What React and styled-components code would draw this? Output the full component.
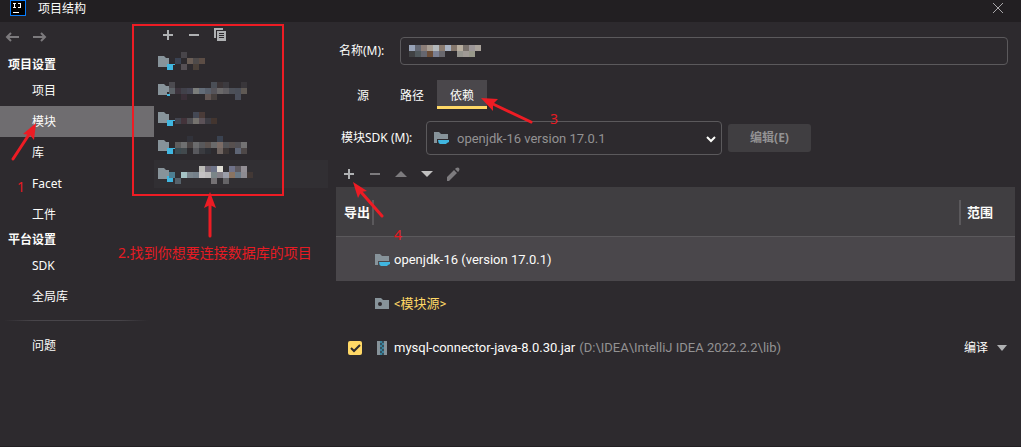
import React from 'react';
import styled, { createGlobalStyle, css } from 'styled-components';

const GlobalStyle = createGlobalStyle`
  * { box-sizing: border-box; }
  body {
    margin: 0;
    background: #2d2a2e;
    color: #fcfcfa;
    font: 12px/16px "Noto Sans", "Noto Sans CJK SC", sans-serif;
  }
  button, input, select { font: inherit; color: inherit; }
  svg { display: block; flex: none; }
`;

const bare = css`
  margin: 0;
  padding: 0;
  border: 0;
  background: none;
`;

const Window = styled.div`
  position: relative;
  display: flex;
  flex-direction: column;
  min-height: 100vh;
  border-bottom: 1px solid #221f22;
`;

const TitleBar = styled.header`
  display: flex;
  align-items: flex-start;
  gap: 12px;
  height: 22px;
  padding: 0 15px 0 10px;
  background: #221f22;
`;

const Title = styled.h1`
  flex: 1;
  margin: 0;
  font-size: 12px;
  line-height: 18px;
  font-weight: 400;
`;

const IconButton = styled.button`
  ${bare}
  display: grid;
  place-items: center;
  width: 16px;
  height: 16px;
`;

const Body = styled.div`
  flex: 1;
  display: grid;
  grid-template-columns: 154px 182px minmax(0, 1fr);
`;

const Sidebar = styled.nav`
  display: flex;
  flex-direction: column;
`;

const History = styled.div`
  display: flex;
  gap: 10px;
  height: 33px;
  padding: 7px 5px;
`;

const GroupTitle = styled.h2`
  margin: 0;
  padding-left: 8px;
  font-size: 12px;
  line-height: 20px;
  font-weight: 700;
`;

const NavItem = styled.button`
  ${bare}
  height: 31px;
  padding-left: 32px;
  text-align: left;
  background: ${(p) => (p.$active ? '#6f6d70' : 'transparent')};
`;

const Divider = styled.hr`
  height: 1px;
  margin: 8px 6px 9px 4px;
  border: 0;
  background: linear-gradient(90deg, transparent, #48454a 20%, #48454a 80%, transparent);
`;

const Modules = styled.section`
  padding-right: 8px;
`;

const Tools = styled.div`
  display: flex;
  gap: 10px;
  height: 26px;
  padding: 5px 6px;
`;

const ModuleItem = styled.button`
  ${bare}
  display: block;
  width: 100%;
  height: 28px;
  padding-left: 3px;
  background: ${(p) => (p.$active ? '#312f33' : 'transparent')};
`;

const Detail = styled.main`
  padding: 15px 6px 0 0;
`;

const Field = styled.div`
  display: flex;
  align-items: center;
  padding: 0 7px 0 3px;
`;

const SdkField = styled(Field)`
  gap: 6px;
  padding-left: 5px;
  margin-top: 12px;
`;

const Label = styled.label`
  flex: none;
  width: ${(p) => p.$width}px;
`;

const NameBox = styled.div`
  display: grid;
  align-items: center;
  flex: 1;

  > * { grid-area: 1 / 1; }
  > svg { margin-left: 9px; pointer-events: none; }
`;

const NameInput = styled.input`
  width: 100%;
  height: 28px;
  padding: 0 8px;
  border: 1px solid #5b595c;
  border-radius: 4px;
  background: transparent;
`;

const Tabs = styled.div`
  display: flex;
  padding-left: 3px;
  margin-top: 15px;
`;

const Tab = styled.button`
  ${bare}
  min-width: 48px;
  height: 29px;
  padding: 2px 13px 0;
  box-shadow: inset 0 -3px ${(p) => (p.$active ? '#ffd866' : 'transparent')};
  background: ${(p) => (p.$active ? '#4a474b' : 'transparent')};
`;

const Combo = styled.div`
  display: grid;
  align-items: center;
  width: 296px;

  > * { grid-area: 1 / 1; }
  > svg { pointer-events: none; margin-left: 8px; }
  > svg:last-child { justify-self: end; margin-right: 5px; }
`;

const ComboSelect = styled.select`
  appearance: none;
  width: 100%;
  height: 34px;
  padding: 2px 24px 0 30px;
  border: 1px solid #5b595c;
  border-radius: 4px;
  background: transparent;
  color: #939293;
  font-family: Roboto, sans-serif;
  font-size: 13px;
`;

const EditButton = styled.button`
  ${bare}
  width: 83px;
  height: 28px;
  border-radius: 3px;
  background: #403e41;
  color: #939293;
  font-weight: 700;
`;

const TableTools = styled(Tools)`
  height: 32px;
  padding: 11px 5px 5px;
`;

const Table = styled.table`
  width: 100%;
  table-layout: fixed;
  border-collapse: collapse;
`;

const HeadRow = styled.tr`
  height: 50px;
  background: #403e41;
  box-shadow: inset 0 -1px #5b595c;
`;

const HeadCell = styled.th`
  width: ${(p) => (p.$width ? `${p.$width}px` : 'auto')};
  padding: 0;
  font-size: 13px;
  text-align: left;
  white-space: nowrap;
`;

const HeadLabel = styled.div`
  height: 25px;
  line-height: 24px;
  padding-left: ${(p) => (p.$side === 'left' ? 6 : 8)}px;
  border-${(p) => p.$side}: 2px solid #5b595c;
`;

const Row = styled.tr`
  height: 44px;
  background: ${(p) => (p.$active ? '#4a474b' : 'transparent')};
`;

const Cell = styled.td`
  padding: 0;
`;

const Entry = styled.div`
  display: flex;
  align-items: center;
  gap: 4px;
  padding: 2px 0 0 1px;
  font-family: Roboto, "Noto Sans CJK SC", sans-serif;
  font-size: 13px;
  color: ${(p) => (p.$source ? '#ffd866' : 'inherit')};
`;

const Path = styled.span`
  color: #939293;
`;

const Check = styled.input`
  appearance: none;
  display: block;
  width: 14px;
  height: 14px;
  margin: 0 0 0 12px;
  border-radius: 2px;
  background: #ffd866;
`;

const CheckBox = styled.label`
  display: grid;
  align-items: center;
  padding-top: 2px;

  > * { grid-area: 1 / 1; }
  > svg { margin-left: 12px; pointer-events: none; }
`;

const Scope = styled.div`
  display: grid;
  align-items: center;
  padding-top: 2px;

  > * { grid-area: 1 / 1; }
  > svg { justify-self: end; margin-right: 8px; pointer-events: none; }
`;

const ScopeSelect = styled.select`
  ${bare}
  appearance: none;
  width: 100%;
  padding-left: 5px;
`;

const Marks = styled.svg`
  position: absolute;
  left: 0;
  top: 0;
  pointer-events: none;
`;

const Note = styled.span`
  position: absolute;
  left: ${(p) => p.$x}px;
  top: ${(p) => p.$y}px;
  color: #e61b23;
  font-size: 14px;
  line-height: 20px;
  white-space: nowrap;
  pointer-events: none;
`;

const Plus = ({ color = '#afb1b3' }) => (
  <svg width="16" height="16"><path d="M7 3h2v4h4v2H9v4H7V9H3V7h4z" fill={color} /></svg>
);
const Minus = ({ color = '#afb1b3' }) => (
  <svg width="16" height="16"><path d="M3 7h10v2H3z" fill={color} /></svg>
);
const Copy = () => (
  <svg width="16" height="16">
    <path d="M2 1h9v2H4v8H2z" fill="#afb1b3" />
    <path fillRule="evenodd" d="M5 4h9v10H5zM7 6v1h5V6zM7 8v1h5V8zM7 10v1h5v-1z" fill="#afb1b3" />
  </svg>
);
const Triangle = ({ up, color }) => (
  <svg width="16" height="16"><path d={up ? 'M2 11h12L8 5z' : 'M2 5h12l-6 6z'} fill={color} /></svg>
);
const Pencil = () => (
  <svg width="16" height="16">
    <path d="M2 15v-4l7-7 3 3-8 8zM10 3l1-1q2-1 3 0 1 1 0 3l-1 1z" fill="#7d7b7e" />
  </svg>
);
const Arrow = ({ back }) => (
  <svg width="16" height="16" fill="none" stroke="#7c7a7d" strokeWidth="2">
    <path d={back ? 'M14 8H2M6 4L2 8l4 4' : 'M2 8h12M10 4l4 4-4 4'} />
  </svg>
);
const CloseIcon = () => (
  <svg width="16" height="16" stroke="#a9a7aa" strokeWidth="1"><path d="M3 3l10 10M13 3L3 13" /></svg>
);
const Chevron = () => (
  <svg width="12" height="12" fill="none" stroke="#fcfcfa" strokeWidth="2"><path d="M2 5l4 4 4-4" /></svg>
);
const Logo = () => (
  <svg width="16" height="16">
    <path d="M0 0h16v16H0z" fill="#087cfa" />
    <path d="M1 1h14v14H1z" fill="#000" />
    <path d="M3 3h3v1H5v3h1v1H3V7h1V4H3zM8 3h3v5H8V7h2V4H8zM3 12h6v1H3z" fill="#fff" />
  </svg>
);
const SdkFolder = ({ bg }) => (
  <svg width="15" height="15">
    <path d="M0 1h5l2 2h7v9H0z" fill="#87939a" />
    <path d="M3 8h12v4l-2 3H5l-2-3z" fill={bg} />
    <path d="M4 9h11v2l-2 1-1 1H6q-2-1-2-4z" fill="#40b6e0" />
  </svg>
);
const SourceFolder = () => (
  <svg width="15" height="14">
    <path d="M0 1h6l2 2h6v9H0z" fill="#87939a" />
    <circle cx="5" cy="7" r="2" fill="#2d2a2e" />
  </svg>
);
const Jar = () => (
  <svg width="15" height="14">
    <path d="M2 0h10v14H2z" fill="#87939a" />
    <path d="M5 0h4v14H5z" fill="#35515d" />
    <path d="M5 1h2M7 3h2M5 5h2M7 7h2M5 9h2M7 11h2M5 13h2" stroke="#40b6e0" />
  </svg>
);

const Mosaic = ({ top, rows }) =>
  rows.flatMap((row, r) =>
    Object.entries(row).map(([c, color]) => (
      <rect key={`${r}-${c}`} x={c * 6} y={top + r * 6} width="6" height="6" fill={color} />
    ))
  );

const modules = [
  { top: 4, rows: [
    { 4: '#48454a' },
    { 3: '#3a4252', 5: '#6a5d55', 6: '#4e4a4a', 7: '#5c4d45' },
    { 4: '#565055', 6: '#4a4039' },
  ] },
  { top: 6, rows: [
    { 2: '#4c4b50', 9: '#4a4e56', 10: '#3b3436', 11: '#3c3a3f', 14: '#39363a' },
    { 2: '#5c6267', 3: '#3d353e', 4: '#41414a', 5: '#444552', 6: '#7b7d7b', 7: '#636c78', 8: '#585f6b', 9: '#56545a', 10: '#6a6869', 11: '#605e62', 12: '#4d5058', 13: '#4a4e58', 14: '#5f5954' },
    { 4: '#3a2f38', 8: '#625654', 9: '#47403e', 13: '#4a4e5a' },
  ] },
  { top: 8, rows: [
    { 6: '#444854', 7: '#4a3b38' },
    { 3: '#42444e', 4: '#43333a', 5: '#4f4e52', 6: '#75726e', 7: '#5c5258', 8: '#3d3c43', 9: '#43352f' },
  ] },
  { top: 4, rows: [
    { 5: '#31323a', 10: '#3a4250' },
    { 3: '#5d5d5d', 4: '#6f7071', 5: '#4a4444', 6: '#6b6b6d', 7: '#58585b', 8: '#5b524f', 9: '#6a6a6b', 10: '#7b6c66', 11: '#535356', 12: '#57504f', 13: '#525054', 14: '#737273' },
    { 3: '#3b4a50', 4: '#42494d', 6: '#58585d', 7: '#3a3b40', 8: '#2e3036', 10: '#6f6460', 11: '#3e3736', 13: '#5e6575', 14: '#4e4848' },
  ] },
  { top: 6, active: true, rows: [
    { 7: '#bdbdb9', 8: '#746f7b', 9: '#6e7489', 10: '#e0ded6', 12: '#70738a', 13: '#5e5a60', 14: '#938f95' },
    { 2: '#4d7f92', 4: '#a5c3c6', 5: '#7a858d', 6: '#74808a', 7: '#c4c2c4', 8: '#bdbbbc', 9: '#7a8588', 10: '#848088', 11: '#9a9da8', 12: '#8a7462', 13: '#6a7986', 14: '#8d8b91', 15: '#423835' },
    { 3: '#56626b', 9: '#747174', 11: '#656467' },
  ] },
];

const nameCells = [
  ['#98a3b8', '#646873', '#8c7e78', '#a89e94', '#b3b8bb', '#8a7b70', '#a9b3c3', '#85776c', '#b8ae9f', '#79716c', '#9c9698', '#aaa39b'],
  { 0: '#404143', 1: '#50585c', 2: '#65666f', 3: '#6b4d38', 4: '#7b8093', 5: '#69686e', 8: '#96958f', 9: '#a09a96', 10: '#98988a' },
];

export default function App() {
  return (
    <Window>
      <GlobalStyle />
      <TitleBar>
        <Logo />
        <Title>项目结构</Title>
        <IconButton aria-label="关闭"><CloseIcon /></IconButton>
      </TitleBar>
      <Body>
        <Sidebar>
          <History>
            <IconButton aria-label="后退"><Arrow back /></IconButton>
            <IconButton aria-label="前进"><Arrow /></IconButton>
          </History>
          <GroupTitle>项目设置</GroupTitle>
          {['项目', '模块', '库', 'Facet', '工件'].map((t) => (
            <NavItem key={t} $active={t === '模块'}>{t}</NavItem>
          ))}
          <GroupTitle>平台设置</GroupTitle>
          <NavItem>SDK</NavItem>
          <NavItem>全局库</NavItem>
          <Divider />
          <NavItem>问题</NavItem>
        </Sidebar>

        <Modules>
          <Tools>
            <IconButton aria-label="添加模块"><Plus /></IconButton>
            <IconButton aria-label="移除模块"><Minus /></IconButton>
            <IconButton aria-label="复制模块"><Copy /></IconButton>
          </Tools>
          {modules.map((m, i) => (
            <ModuleItem key={i} $active={m.active} aria-label={`模块 ${i + 1}`}>
              <svg width="100" height="28">
                <path d="M1 8h6l2 2h3v9H1z" fill="#87939a" />
                <path d="M10 16h6v6h-6z" fill="#2d2a2e" />
                <path d={i === 1 ? 'M10 18h3v2h-3z' : 'M10 16h8v1h-2v5h-6z'} fill="#40b6e0" />
                <Mosaic top={m.top} rows={m.rows} />
              </svg>
            </ModuleItem>
          ))}
        </Modules>

        <Detail>
          <Field>
            <Label htmlFor="name" $width={61}>名称(M):</Label>
            <NameBox>
              <NameInput id="name" />
              <svg width="72" height="12"><Mosaic top={0} rows={nameCells} /></svg>
            </NameBox>
          </Field>
          <Tabs role="tablist">
            {['源', '路径', '依赖'].map((t) => (
              <Tab key={t} role="tab" aria-selected={t === '依赖'} $active={t === '依赖'}>{t}</Tab>
            ))}
          </Tabs>
          <SdkField>
            <Label htmlFor="sdk" $width={79}>模块SDK (M):</Label>
            <Combo>
              <ComboSelect id="sdk"><option>openjdk-16 version 17.0.1</option></ComboSelect>
              <SdkFolder bg="#2d2a2e" />
              <Chevron />
            </Combo>
            <EditButton>编辑(E)</EditButton>
          </SdkField>
          <TableTools>
            <IconButton aria-label="添加"><Plus /></IconButton>
            <IconButton aria-label="移除"><Minus color="#7d7b7e" /></IconButton>
            <IconButton aria-label="上移"><Triangle up color="#7d7b7e" /></IconButton>
            <IconButton aria-label="下移"><Triangle color="#c1c0c0" /></IconButton>
            <IconButton aria-label="编辑"><Pencil /></IconButton>
          </TableTools>
          <Table>
            <thead>
              <HeadRow>
                <HeadCell $width={38}><HeadLabel $side="right">导出</HeadLabel></HeadCell>
                <HeadCell />
                <HeadCell $width={56}><HeadLabel $side="left">范围</HeadLabel></HeadCell>
              </HeadRow>
            </thead>
            <tbody>
              <Row $active>
                <Cell />
                <Cell><Entry><SdkFolder bg="#4a474b" />openjdk-16 (version 17.0.1)</Entry></Cell>
                <Cell />
              </Row>
              <Row>
                <Cell />
                <Cell><Entry $source><SourceFolder />&lt;模块源&gt;</Entry></Cell>
                <Cell />
              </Row>
              <Row>
                <Cell>
                  <CheckBox>
                    <Check type="checkbox" defaultChecked aria-label="导出" />
                    <svg width="14" height="14" fill="none" stroke="#2d2a2e" strokeWidth="2"><path d="M3 7l3 3 6-6" /></svg>
                  </CheckBox>
                </Cell>
                <Cell>
                  <Entry><Jar />mysql-connector-java-8.0.30.jar <Path>(D:\IDEA\IntelliJ IDEA 2022.2.2\lib)</Path></Entry>
                </Cell>
                <Cell>
                  <Scope>
                    <ScopeSelect aria-label="范围"><option>编译</option></ScopeSelect>
                    <svg width="10" height="6"><path d="M0 0h10L5 6z" fill="#afb1b3" /></svg>
                  </Scope>
                </Cell>
              </Row>
            </tbody>
          </Table>
        </Detail>
      </Body>

      <Marks width="560" height="240" fill="none" stroke="#ed1c24" strokeWidth="3" strokeLinecap="round">
        <path d="M133 25h150v170H133z" strokeWidth="2" />
        <path d="M13 159L30 133M210 236V205M531 122L493 104M382 216L361 192" />
        <g fill="#ed1c24" stroke="none">
          <path d="M36 123l-2 17-4-5-7-1z" />
          <path d="M210 192l6 16-6-3-6 3z" />
          <path d="M481 98l17 1-5 5 0 7z" />
          <path d="M353 182l14 9-6 1-3 6z" />
        </g>
      </Marks>
      <Note $x={17} $y={177}>1</Note>
      <Note $x={118} $y={243}>2.找到你想要连接数据库的项目</Note>
      <Note $x={550} $y={109}>3</Note>
      <Note $x={394} $y={225}>4</Note>
    </Window>
  );
}
